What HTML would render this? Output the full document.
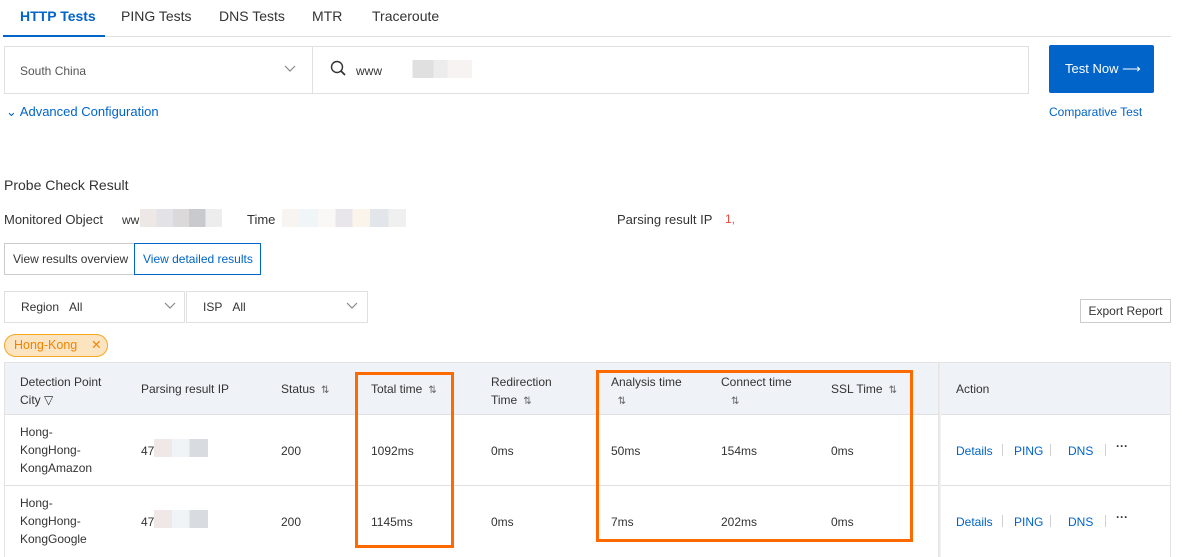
<!DOCTYPE html>
<html><head><meta charset="utf-8"><style>
*{box-sizing:border-box;margin:0;padding:0}
body{width:1182px;height:557px;background:#fff;font-family:"Liberation Sans",sans-serif;font-size:12px;color:#333;position:relative;overflow:hidden}
.a{position:absolute;white-space:nowrap}
.blue{color:#0064c8}
.bl{position:absolute;background:#e0e0e0}
.pix{position:absolute;height:18px}
.s{font-size:10px;color:#666;margin-left:6px}
.box{position:absolute;border:3px solid #ff6a00}
.sep{position:absolute;width:1px;height:12px;background:#d0d0d0}
</style></head><body>
<div class="a" style="left:20px;top:8px;font-size:14px;font-weight:bold;color:#0064c8">HTTP Tests</div>
<div class="a" style="left:121px;top:8px;font-size:14px">PING Tests</div>
<div class="a" style="left:219px;top:8px;font-size:14px">DNS Tests</div>
<div class="a" style="left:312px;top:8px;font-size:14px">MTR</div>
<div class="a" style="left:372px;top:8px;font-size:14px">Traceroute</div>
<div class="bl" style="left:3px;top:36px;width:1168px;height:1px"></div>
<div class="a" style="left:3px;top:35px;width:102px;height:2px;background:#0064c8"></div>
<div class="a" style="left:4px;top:46px;width:1025px;height:48px;border:1px solid #e0e0e0"></div>
<div class="bl" style="left:312px;top:46px;width:1px;height:48px"></div>
<div class="a" style="left:20px;top:64px;color:#555">South China</div>
<svg class="a" style="left:284px;top:65px" width="12" height="8"><path d="M1 1l5 5 5-5" fill="none" stroke="#888" stroke-width="1.2"/></svg>
<svg class="a" style="left:330px;top:60px" width="18" height="18"><circle cx="7" cy="7" r="5.5" fill="none" stroke="#333" stroke-width="1.4"/><path d="M11 11l4 4" stroke="#333" stroke-width="1.8"/></svg>
<div class="a" style="left:356px;top:64px">www</div>
<div class="pix" style="left:402px;top:60px;width:70px;background:linear-gradient(90deg,#fff 0 15%,#e0e0e0 15% 45%,#ececec 45% 65%,#f6f3f2 65%)"></div>
<div class="a" style="left:1049px;top:45px;width:105px;height:48px;background:#0064c8;border-radius:2px;color:#fff;font-size:13px;line-height:48px;padding-left:16px">Test Now ⟶</div>
<div class="a blue" style="left:1049px;top:105px">Comparative Test</div>
<div class="a blue" style="left:6px;top:104px;font-size:13px">⌄ Advanced Configuration</div>
<div class="a" style="left:4px;top:177px;font-size:14px">Probe Check Result</div>
<div class="a" style="left:4px;top:212px;font-size:13px">Monitored Object</div>
<div class="a" style="left:122px;top:213px">ww</div>
<div class="pix" style="left:140px;top:209px;width:82px;background:linear-gradient(90deg,#ede8e5 0 20%,#e3e2e6 20% 40%,#dcd9db 40% 60%,#c9cacd 60% 80%,#ededed 80%)"></div>
<div class="a" style="left:247px;top:212px;font-size:13px">Time</div>
<div class="pix" style="left:282px;top:209px;width:124px;background:linear-gradient(90deg,#f8f4f2 0 14%,#f0f5f8 14% 29%,#faf8f6 29% 43%,#e8e6ea 43% 57%,#fbf4ea 57% 71%,#e2e6ea 71% 86%,#f0f0f0 86%)"></div>
<div class="a" style="left:617px;top:212px;font-size:13px">Parsing result IP</div>
<div class="a" style="left:725px;top:212px;color:#e84c3d">1,</div>
<div class="a" style="left:4px;top:243px;width:131px;height:32px;border:1px solid #ccc;line-height:30px;padding-left:8px">View results overview</div>
<div class="a" style="left:134px;top:243px;width:127px;height:32px;border:1px solid #0064c8;line-height:30px;padding-left:8px;color:#0064c8">View detailed results</div>
<div class="a" style="left:4px;top:291px;width:181px;height:32px;border:1px solid #e0e0e0;line-height:30px;padding-left:16px">Region&nbsp;&nbsp;&nbsp;All</div>
<div class="a" style="left:186px;top:291px;width:182px;height:32px;border:1px solid #e0e0e0;line-height:30px;padding-left:16px">ISP&nbsp;&nbsp;&nbsp;All</div>
<svg class="a" style="left:164px;top:302px" width="12" height="8"><path d="M1 1l5 5 5-5" fill="none" stroke="#888" stroke-width="1.2"/></svg>
<svg class="a" style="left:346px;top:302px" width="12" height="8"><path d="M1 1l5 5 5-5" fill="none" stroke="#888" stroke-width="1.2"/></svg>
<div class="a" style="left:1080px;top:299px;width:91px;height:24px;border:1px solid #ccc;line-height:22px;text-align:center">Export Report</div>
<div class="a" style="left:4px;top:334px;width:104px;height:23px;border:1px solid #f5a623;background:#fde4c0;border-radius:12px;color:#f08300;line-height:21px;padding-left:9px;font-size:12.5px">Hong-Kong&nbsp;&nbsp;&nbsp;&nbsp;✕</div>
<div class="a" style="left:4px;top:362px;width:1167px;height:195px;border:1px solid #e3e3e3;border-bottom:none"></div>
<div class="a" style="left:5px;top:363px;width:1165px;height:51px;background:#eff2f7"></div>
<div class="bl" style="left:5px;top:414px;width:1165px;height:1px"></div>
<div class="bl" style="left:5px;top:485px;width:1165px;height:1px"></div>
<div class="a" style="left:938px;top:363px;width:3px;height:194px;background:linear-gradient(90deg,#e0e0e0,#f6f6f6)"></div>
<div class="a" style="left:20px;top:373px;line-height:18px">Detection Point<br>City ▽</div>
<div class="a" style="left:141px;top:382px">Parsing result IP</div>
<div class="a" style="left:281px;top:382px">Status<span class="s">⇅</span></div>
<div class="a" style="left:371px;top:382px">Total time<span class="s">⇅</span></div>
<div class="a" style="left:491px;top:373px;line-height:18px">Redirection<br>Time<span class="s">⇅</span></div>
<div class="a" style="left:611px;top:373px;line-height:18px">Analysis time<br>&nbsp;&nbsp;<span class="s" style="margin:0">⇅</span></div>
<div class="a" style="left:721px;top:373px;line-height:18px">Connect time<br>&nbsp;&nbsp;&nbsp;<span class="s" style="margin:0">⇅</span></div>
<div class="a" style="left:831px;top:382px">SSL Time<span class="s">⇅</span></div>
<div class="a" style="left:956px;top:382px">Action</div>
<div class="a" style="left:20px;top:423px;line-height:18px">Hong-<br>KongHong-<br>KongAmazon</div>
<div class="a" style="left:20px;top:494px;line-height:18px">Hong-<br>KongHong-<br>KongGoogle</div>
<div class="a" style="left:141px;top:444px">47</div>
<div class="pix" style="left:154px;top:439px;width:54px;background:linear-gradient(90deg,#efe8e6 0 33%,#f1f4f6 33% 66%,#d8dce1 66%)"></div>
<div class="a" style="left:141px;top:515px">47</div>
<div class="pix" style="left:154px;top:510px;width:54px;background:linear-gradient(90deg,#efe8e6 0 33%,#f1f4f6 33% 66%,#d8dce1 66%)"></div>
<div class="a" style="left:281px;top:444px">200</div><div class="a" style="left:281px;top:515px">200</div>
<div class="a" style="left:371px;top:444px">1092ms</div><div class="a" style="left:371px;top:515px">1145ms</div>
<div class="a" style="left:491px;top:444px">0ms</div><div class="a" style="left:491px;top:515px">0ms</div>
<div class="a" style="left:611px;top:444px">50ms</div><div class="a" style="left:611px;top:515px">7ms</div>
<div class="a" style="left:721px;top:444px">154ms</div><div class="a" style="left:721px;top:515px">202ms</div>
<div class="a" style="left:831px;top:444px">0ms</div><div class="a" style="left:831px;top:515px">0ms</div>
<div class="a blue" style="left:956px;top:444px">Details</div><div class="sep" style="left:1002px;top:444px"></div>
<div class="a blue" style="left:1014px;top:444px">PING</div><div class="sep" style="left:1050px;top:444px"></div>
<div class="a blue" style="left:1068px;top:444px">DNS</div><div class="sep" style="left:1105px;top:444px"></div>
<div class="a" style="left:1116px;top:439px;font-weight:bold">···</div>
<div class="a blue" style="left:956px;top:515px">Details</div><div class="sep" style="left:1002px;top:515px"></div>
<div class="a blue" style="left:1014px;top:515px">PING</div><div class="sep" style="left:1050px;top:515px"></div>
<div class="a blue" style="left:1068px;top:515px">DNS</div><div class="sep" style="left:1105px;top:515px"></div>
<div class="a" style="left:1116px;top:510px;font-weight:bold">···</div>
<div class="box" style="left:355px;top:372px;width:99px;height:176px"></div>
<div class="box" style="left:596px;top:370px;width:317px;height:172px"></div>
</body></html>
